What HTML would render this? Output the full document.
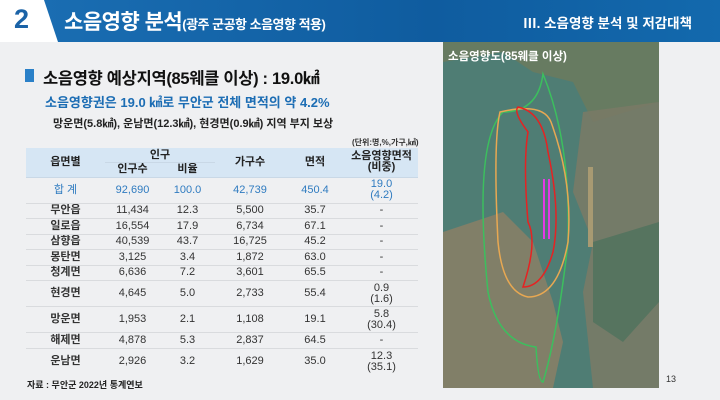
<!DOCTYPE html>
<html><head><meta charset="utf-8"><style>
*{margin:0;padding:0;box-sizing:border-box}
body{width:720px;height:400px;overflow:hidden;background:#eff0f2;font-family:"Liberation Sans","Noto Sans CJK KR",sans-serif;position:relative}
.hdr{position:absolute;left:0;top:0;width:720px;height:42px;background:linear-gradient(90deg,#1b6fb4,#0f5c9f 60%,#1369ad)}
.num{position:absolute;left:0;top:0;width:58px;height:42px;background:#fff;clip-path:polygon(0 0,44px 0,58px 42px,0 42px)}
.num span{position:absolute;left:14px;top:4px;font-size:27px;font-weight:bold;color:#1b63a7}
.t1{position:absolute;left:64px;top:6px;color:#fff;font-size:21px;font-weight:bold;letter-spacing:-0.5px}
.t1 small{font-size:13px;font-weight:bold}
.t2{position:absolute;right:28px;top:12px;color:#fff;font-size:13.5px;font-weight:bold}
.sq{position:absolute;left:25px;top:69px;width:9px;height:13px;background:#2a80c8}
.h2{position:absolute;left:43px;top:65px;font-size:16.5px;font-weight:bold;color:#111;letter-spacing:-0.3px}
.h3{position:absolute;left:45px;top:92px;font-size:13px;color:#1c6db4;font-weight:bold}
.h4{position:absolute;left:53px;top:115px;font-size:11px;color:#222;font-weight:bold}
.unit{position:absolute;left:352px;top:137px;font-size:8px;color:#333;font-weight:bold}
table{position:absolute;left:26px;top:148px;width:392px;border-collapse:collapse;font-size:11px;color:#333;text-align:center;table-layout:fixed}
th,td{line-height:11px;padding:0;overflow:hidden}
th{background:#d6e6f4;font-weight:bold;color:#222;font-size:11px;height:14.5px;border-bottom:1px solid #c9d8e6}
td{border-bottom:1px solid #d9dbde}
td:first-child{font-weight:bold;color:#333}
.sum td{color:#2f7bc0;font-weight:normal}
.src{position:absolute;left:27px;top:378px;font-size:9px;font-weight:bold;color:#222}
.map{position:absolute;left:443px;top:42px;width:216px;height:346px;background:#4d7a73;overflow:hidden}
.pg{position:absolute;left:666px;top:374px;font-size:9px;color:#333}
</style></head><body>
<div class="hdr"></div>
<div class="num"><span>2</span></div>
<div class="t1">소음영향 분석<small>(광주 군공항 소음영향 적용)</small></div>
<div class="t2">Ⅲ. 소음영향 분석 및 저감대책</div>
<div class="sq"></div>
<div class="h2">소음영향 예상지역(85웨클 이상) : 19.0㎢</div>
<div class="h3">소음영향권은 19.0 ㎢로 무안군 전체 면적의 약 4.2%</div>
<div class="h4">망운면(5.8㎢), 운남면(12.3㎢), 현경면(0.9㎢) 지역 부지 보상</div>
<div class="unit">(단위:명,%,가구,㎢)</div>
<table>
<colgroup><col style="width:79px"><col style="width:55px"><col style="width:55px"><col style="width:70px"><col style="width:60px"><col style="width:73px"></colgroup>
<tr style="height:14.5px"><th rowspan="2">읍면별</th><th colspan="2">인구</th><th rowspan="2">가구수</th><th rowspan="2">면적</th><th rowspan="2">소음영향면적<br>(비중)</th></tr>
<tr style="height:14.5px"><th>인구수</th><th>비율</th></tr>
<tr class="sum" style="height:26px"><td style="color:#2f7bc0;font-weight:normal">합 계</td><td>92,690</td><td>100.0</td><td>42,739</td><td>450.4</td><td>19.0<br>(4.2)</td></tr>
<tr style="height:15.5px"><td>무안읍</td><td>11,434</td><td>12.3</td><td>5,500</td><td>35.7</td><td>-</td></tr>
<tr style="height:15.5px"><td>일로읍</td><td>16,554</td><td>17.9</td><td>6,734</td><td>67.1</td><td>-</td></tr>
<tr style="height:15.5px"><td>삼향읍</td><td>40,539</td><td>43.7</td><td>16,725</td><td>45.2</td><td>-</td></tr>
<tr style="height:15.5px"><td>몽탄면</td><td>3,125</td><td>3.4</td><td>1,872</td><td>63.0</td><td>-</td></tr>
<tr style="height:15.5px"><td>청계면</td><td>6,636</td><td>7.2</td><td>3,601</td><td>65.5</td><td>-</td></tr>
<tr style="height:26px"><td>현경면</td><td>4,645</td><td>5.0</td><td>2,733</td><td>55.4</td><td>0.9<br>(1.6)</td></tr>
<tr style="height:26px"><td>망운면</td><td>1,953</td><td>2.1</td><td>1,108</td><td>19.1</td><td>5.8<br>(30.4)</td></tr>
<tr style="height:15.5px"><td>해제면</td><td>4,878</td><td>5.3</td><td>2,837</td><td>64.5</td><td>-</td></tr>
<tr style="height:27px"><td style="border:none">운남면</td><td style="border:none">2,926</td><td style="border:none">3.2</td><td style="border:none">1,629</td><td style="border:none">35.0</td><td style="border:none">12.3<br>(35.1)</td></tr>
</table>
<div class="src">자료 : 무안군 2022년 통계연보</div>
<div class="map">
<svg width="216" height="346" viewBox="0 0 216 346">
<rect width="216" height="346" fill="#4f7d74"/>
<path d="M0 0H216V60L150 80 130 40 90 30 60 10 0 20Z" fill="#6d7a5c" opacity=".8"/>
<path d="M140 70L216 60V346H150L140 250 150 200 130 150Z" fill="#7a7a66" opacity=".85"/>
<path d="M0 190L60 170 90 200 110 260 120 300 110 346H0Z" fill="#8a7f66" opacity=".85"/>
<path d="M150 200L216 180V260L180 300 150 280Z" fill="#56745f"/>
<path d="M100 32Q95 70 60 70Q30 100 45 250Q55 300 93 305Q95 340 100 340Q115 290 125 200Q128 100 100 32Z" fill="none" stroke="#3cbf5e" stroke-width="1.5"/>
<path d="M57 70Q100 60 108 80Q130 140 125 200Q115 255 85 255Q60 250 55 200Q50 100 57 70Z" fill="none" stroke="#e8a852" stroke-width="1.5"/>
<path d="M75 65Q100 70 105 110Q118 170 110 210Q100 245 80 245Q95 200 85 180Q80 120 85 90Q70 70 75 65Z" fill="none" stroke="#e62222" stroke-width="1.5"/>
<rect x="100" y="137" width="2" height="60" fill="#e23ae6"/><rect x="105" y="137" width="2" height="60" fill="#e23ae6"/>
<rect x="145" y="125" width="5" height="80" fill="#a89a72"/>
</svg>
<div style="position:absolute;left:5px;top:6px;color:#fff;font-size:11.5px;font-weight:bold">소음영향도(85웨클 이상)</div>
</div>
<div class="pg">13</div>
</body></html>
